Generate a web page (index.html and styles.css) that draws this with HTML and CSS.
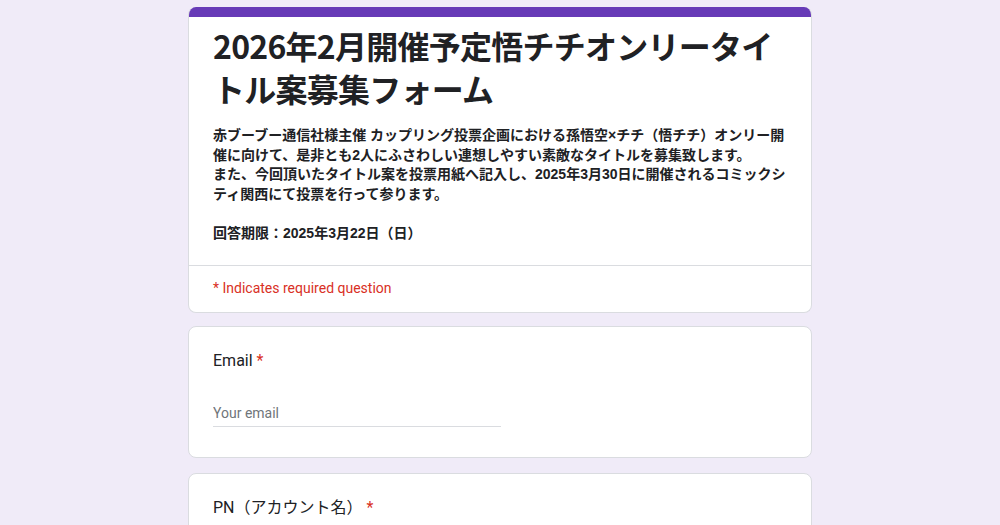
FILE: index.html
```html
<!DOCTYPE html>
<html lang="ja">
<head>
<meta charset="utf-8">
<title>2026年2月開催予定悟チチオンリータイトル案募集フォーム</title>
<link rel="stylesheet" href="styles.css">
</head>
<body>
<main class="form">
  <section class="card header-card">
    <div class="accent"></div>
    <div class="header-body">
      <h1 class="title">2026年2月開催予定悟チチオンリータイトル案募集フォーム</h1>
      <div class="description">赤ブーブー通信社様主催 カップリング投票企画における孫悟空×チチ（悟チチ）オンリー開催に向けて、是非とも2人にふさわしい連想しやすい素敵なタイトルを募集致します。<br>また、今回頂いたタイトル案を投票用紙へ記入し、2025年3月30日に開催されるコミックシティ関西にて投票を行って参ります。<br><br>回答期限：2025年3月22日（日）</div>
    </div>
    <div class="required-note">* Indicates required question</div>
  </section>

  <section class="card question">
    <div class="q-label">Email <span class="star">*</span></div>
    <div class="input-wrap">
      <input class="text-input" type="email" placeholder="Your email">
    </div>
  </section>

  <section class="card question">
    <div class="q-label">PN（アカウント名） <span class="star">*</span></div>
  </section>
</main>
</body>
</html>
```

FILE: styles.css
```css
* { box-sizing: border-box; }

html, body {
  margin: 0;
  padding: 0;
}

body {
  background: #f0ebf8;
  font-family: Roboto, "Noto Sans CJK JP", sans-serif;
  color: #202124;
}

.form {
  width: 624px;
  margin: 0 auto;
  padding-top: 7px;
  display: flex;
  flex-direction: column;
  gap: 13px;
}

.card {
  background: #fff;
  border: 1px solid #dadce0;
  border-radius: 8px;
  overflow: hidden;
}

.header-card {
  border-top: none;
}

.accent {
  height: 10px;
  background: #673ab7;
}

.header-body {
  padding: 7px 24px 22px;
  border-bottom: 1px solid #dadce0;
}

.title {
  margin: 0;
  font-family: "Noto Sans CJK JP", sans-serif;
  font-weight: 700;
  font-size: 32px;
  line-height: 43px;
  color: #202124;
  letter-spacing: -0.75px;
}

.description {
  margin-top: 16px;
  font-family: "Liberation Sans", "Noto Sans CJK JP", sans-serif;
  font-weight: 700;
  font-size: 14px;
  line-height: 19.5px;
  color: #202124;
}

.required-note {
  padding: 12px 24px 14px;
  font-family: Roboto, sans-serif;
  font-size: 14px;
  line-height: 20px;
  color: #d93025;
}

.question {
  padding: 22px 24px 30px;
}

.question + .question {
  margin-top: 2px;
}

.q-label {
  font-family: Roboto, "Noto Sans CJK JP", sans-serif;
  font-size: 16px;
  line-height: 24px;
  color: #202124;
}

.star {
  color: #d93025;
}

.input-wrap {
  margin-top: 30px;
  width: 288px;
}

.text-input {
  display: block;
  width: 100%;
  border: none;
  border-bottom: 1px solid #dadce0;
  padding: 0 0 3px;
  margin: 0;
  font-family: Roboto, sans-serif;
  font-size: 14px;
  line-height: 20px;
  color: #202124;
  background: transparent;
  outline: none;
}

.text-input::placeholder {
  color: #70757a;
}
```
